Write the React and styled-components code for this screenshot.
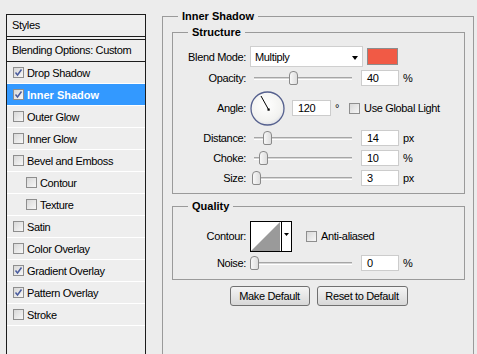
import React from "react";
import styled, { createGlobalStyle } from "styled-components";

const GlobalStyle = createGlobalStyle`
  html, body {
    margin: 0;
    background: #ececec;
    overflow: hidden;
  }
  body {
    font-family: "Liberation Sans", Arial, sans-serif;
    font-size: 11px;
    letter-spacing: -0.35px;
    color: #000;
  }
  * { box-sizing: border-box; }
`;

const styleItems = [
  { name: "Drop Shadow", checked: true },
  { name: "Inner Shadow", checked: true, active: true },
  { name: "Outer Glow" },
  { name: "Inner Glow" },
  { name: "Bevel and Emboss" },
  { name: "Contour", nested: true },
  { name: "Texture", nested: true },
  { name: "Satin" },
  { name: "Color Overlay" },
  { name: "Gradient Overlay", checked: true },
  { name: "Pattern Overlay", checked: true },
  { name: "Stroke" },
];

const sliders = [
  { label: "Distance:", value: 14, unit: "px" },
  { label: "Choke:", value: 10, unit: "%" },
  { label: "Size:", value: 3, unit: "px" },
];

function Checkbox({ checked }) {
  return (
    <Check>
      {checked && (
        <svg width="9" height="9" viewBox="0 0 9 9">
          <path d="M1.5 4.5 L3.5 7 L7.5 1.5" fill="none" stroke="#4a5c9e" strokeWidth="1.5" />
        </svg>
      )}
    </Check>
  );
}

function Slider({ value }) {
  return (
    <SliderBox>
      <Rail>
        <Track />
        {/* thumb position comes from the value */}
        <Thumb style={{ left: `${value}%` }} />
      </Rail>
    </SliderBox>
  );
}

function Dial() {
  return (
    <svg width="35" height="35" viewBox="0 0 35 35">
      <defs>
        <radialGradient id="dialFill" cx="0.45" cy="0.4" r="0.65">
          <stop offset="0" stopColor="#ffffff" />
          <stop offset="0.75" stopColor="#f2f2f0" />
          <stop offset="1" stopColor="#d9dbe3" />
        </radialGradient>
      </defs>
      <circle cx="17.5" cy="17.5" r="16.5" fill="url(#dialFill)" stroke="#55608e" strokeWidth="1.3" />
      <line x1="18.5" y1="18.5" x2="11" y2="5" stroke="#000" strokeWidth="1" />
      <rect x="17.5" y="17.5" width="2.2" height="2.2" fill="#000" />
    </svg>
  );
}

function ContourPicker() {
  return (
    <svg width="42" height="31" viewBox="0 0 42 31">
      <rect x="0.5" y="0.5" width="41" height="30" fill="#fff" stroke="#000" />
      <polygon points="1,30 30,1 30,30" fill="#9a9a9a" />
      <line x1="31.5" y1="1" x2="31.5" y2="30" stroke="#000" />
      <polygon points="34,12 39,12 36.5,15" fill="#000" />
    </svg>
  );
}

function App() {
  return (
    <>
      <GlobalStyle />
      <Page>
        <StylesPanel>
          <PanelHeader>Styles</PanelHeader>
          <BlendingRow>Blending Options: Custom</BlendingRow>
          {styleItems.map((item) => (
            <StyleRow key={item.name} $active={item.active} $nested={item.nested}>
              <Checkbox checked={item.checked} />
              {item.name}
            </StyleRow>
          ))}
        </StylesPanel>

        <OuterSet>
          <OuterLegend>Inner Shadow</OuterLegend>

          <Structure>
            <InnerLegend>Structure</InnerLegend>
            <Row $h={21}>
              <Label>Blend Mode:</Label>
              <Select>
                Multiply
                <Arrow />
              </Select>
              <Swatch />
            </Row>
            <Row $h={21}>
              <Label>Opacity:</Label>
              <Slider value={40} />
              <Input>40</Input>
              <Unit>%</Unit>
            </Row>
            <Row $h={40}>
              <Label>Angle:</Label>
              <Dial />
              <Input $w={39} $ml={7}>120</Input>
              <Unit>°</Unit>
              <CheckLabel $ml={10}>
                <Checkbox />
                Use Global Light
              </CheckLabel>
            </Row>
            {sliders.map((s) => (
              <Row key={s.label} $h={20}>
                <Label>{s.label}</Label>
                <Slider value={s.value} />
                <Input>{s.value}</Input>
                <Unit>{s.unit}</Unit>
              </Row>
            ))}
          </Structure>

          <Quality>
            <InnerLegend>Quality</InnerLegend>
            <Row $h={34}>
              <Label>Contour:</Label>
              <ContourPicker />
              <CheckLabel $ml={14}>
                <Checkbox />
                Anti-aliased
              </CheckLabel>
            </Row>
            <Row $h={20}>
              <Label>Noise:</Label>
              <Slider value={0} />
              <Input>0</Input>
              <Unit>%</Unit>
            </Row>
          </Quality>

          <Buttons>
            <Button $w={80}>Make Default</Button>
            <Button $w={91}>Reset to Default</Button>
          </Buttons>
        </OuterSet>
      </Page>
    </>
  );
}

export default App;

const Page = styled.div`
  display: flex;
  align-items: flex-start;
  gap: 16px;
  padding: 10px 0 0 6px;
  height: 354px;
  overflow: hidden;
`;

const StylesPanel = styled.div`
  width: 140px;
  height: 340px;
  margin-top: 4px;
  border: 1px solid #1c1c1c;
  border-bottom: none;
  background: #eeeeee;
  flex-shrink: 0;
`;

const PanelHeader = styled.div`
  height: 22px;
  line-height: 21px;
  padding-left: 5px;
  border-bottom: 1px solid #1c1c1c;
  margin-bottom: 2px;
`;

const BlendingRow = styled.div`
  height: 23px;
  line-height: 21px;
  padding-left: 5px;
  border-top: 1px solid #1c1c1c;
  border-bottom: 1px solid #1c1c1c;
`;

const StyleRow = styled.div`
  display: flex;
  align-items: center;
  gap: 3px;
  height: 22px;
  padding-left: ${(p) => (p.$nested ? 19 : 6)}px;
  border-bottom: 1px solid #ffffff;
  background: ${(p) => (p.$active ? "#3399ff" : "transparent")};
  color: ${(p) => (p.$active ? "#fff" : "#000")};
  font-weight: ${(p) => (p.$active ? "bold" : "normal")};
  letter-spacing: ${(p) => (p.$active ? "0" : "-0.35px")};
`;

const Check = styled.span`
  display: inline-flex;
  align-items: center;
  justify-content: center;
  width: 11px;
  height: 11px;
  border: 1px solid #8e8e8e;
  background: linear-gradient(135deg, #d8d8d8, #f7f7f7);
  flex-shrink: 0;
`;

const OuterSet = styled.fieldset`
  width: 312px;
  height: 350px;
  margin: 0;
  padding: 0 8px 0 9px;
  border: 1px solid #9a9a9a;
  border-bottom: none;
  flex-shrink: 0;
`;

const OuterLegend = styled.legend`
  margin-left: 6px;
  padding: 0 4px;
  font-weight: bold;
  line-height: 13px;
  letter-spacing: 0;
`;

const InnerLegend = styled(OuterLegend)`
  margin-left: 15px;
`;

const Structure = styled.fieldset`
  margin: 3px 0 0;
  padding: 7px 0 5px;
  border: 1px solid #9a9a9a;
`;

const Quality = styled(Structure)`
  margin-top: 6px;
  padding: 6px 0 6px;
`;

const Row = styled.div`
  display: flex;
  align-items: center;
  height: ${(p) => p.$h}px;
`;

const Label = styled.span`
  width: 73px;
  margin-right: 4px;
  text-align: right;
  flex-shrink: 0;
`;

const Select = styled.div`
  display: flex;
  align-items: center;
  justify-content: space-between;
  width: 113px;
  height: 21px;
  padding: 0 4px;
  background: #fff;
  border: 1px solid #cfcfcf;
`;

const Arrow = styled.span`
  width: 0;
  height: 0;
  border-left: 3.5px solid transparent;
  border-right: 3.5px solid transparent;
  border-top: 4px solid #000;
  margin-top: 2px;
`;

const Swatch = styled.span`
  width: 31px;
  height: 17px;
  margin-left: 4px;
  background: #f15a45;
  border: 1px solid #8c8c8c;
`;

const SliderBox = styled.div`
  width: 106px;
  height: 16px;
  padding: 0 4px;
  flex-shrink: 0;
`;

const Rail = styled.div`
  position: relative;
  height: 16px;
`;

const Track = styled.div`
  position: relative;
  top: 7px;
  height: 3px;
  border-top: 1px solid #a6a6a6;
  border-bottom: 1px solid #ffffff;
  background: #d6d6d6;
`;

const Thumb = styled.span`
  position: absolute;
  top: 1px;
  width: 9px;
  height: 14px;
  margin-left: -4.5px;
  border: 1px solid #8a8a8a;
  border-radius: 4px 4px 2px 2px;
  background: linear-gradient(90deg, #f8f8f8, #dedede);
`;

const Input = styled.span`
  width: ${(p) => p.$w || 38}px;
  height: 16px;
  margin-left: ${(p) => p.$ml || 5}px;
  padding-left: 5px;
  line-height: 14px;
  background: #fff;
  border: 1px solid #cccccc;
  flex-shrink: 0;
`;

const Unit = styled.span`
  margin-left: 4px;
`;

const CheckLabel = styled.span`
  display: inline-flex;
  align-items: center;
  gap: 4px;
  margin-left: ${(p) => p.$ml}px;
`;

const Buttons = styled.div`
  display: flex;
  justify-content: center;
  gap: 7px;
  margin-top: 6px;
`;

const Button = styled.div`
  width: ${(p) => p.$w}px;
  height: 20px;
  line-height: 18px;
  text-align: center;
  border: 1px solid #707070;
  border-radius: 3px;
  background: linear-gradient(#f4f4f4, #e6e6e6 50%, #d8d8d8);
`;
